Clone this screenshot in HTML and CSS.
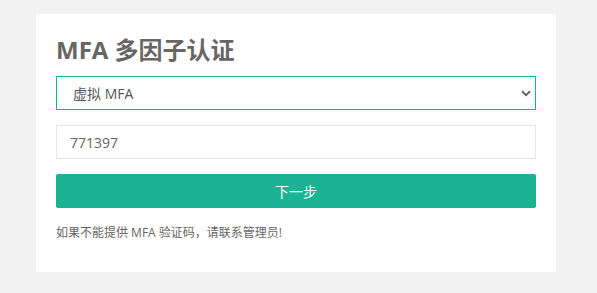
FILE: index.html
```html
<!DOCTYPE html>
<html lang="zh-CN">
<head>
<meta charset="utf-8">
<title>MFA 多因子认证</title>
<link rel="stylesheet" href="styles.css">
</head>
<body>
<div class="card">
  <h2 class="title">MFA 多因子认证</h2>
  <div class="select-wrap">
    <select class="field select">
      <option>虚拟 MFA</option>
    </select>
    <svg class="chev" width="10" height="7" viewBox="0 0 10 7"><path d="M1 1.2 L5 5.2 L9 1.2" fill="none" stroke="#666" stroke-width="2"/></svg>
  </div>
  <input class="field input" type="text" value="771397">
  <button class="btn" type="button">下一步</button>
  <p class="hint">如果不能提供 MFA 验证码，请联系管理员!</p>
</div>
</body>
</html>
```
FILE: styles.css
```css
html, body {
  margin: 0;
  padding: 0;
  background: #f2f2f2;
}
body {
  padding: 14px 0 0 36px;
  font-family: "Open Sans", "Noto Sans CJK SC", sans-serif;
  color: #666;
}
.card {
  width: 480px;
  height: 218px;
  padding: 20px;
  background: #fff;
  display: flex;
  flex-direction: column;
}
.title {
  margin: 0 0 10px;
  font-size: 24px;
  line-height: 32px;
  font-weight: 700;
  color: #666;
}
.select-wrap {
  position: relative;
  margin-bottom: 15px;
}
.field {
  box-sizing: border-box;
  display: block;
  width: 480px;
  height: 34px;
  margin: 0;
  font-family: "Open Sans", "Noto Sans CJK SC", sans-serif;
  font-size: 14px;
  color: #555;
  background: #fff;
  border-radius: 0;
  outline: none;
}
.select {
  -webkit-appearance: none;
  appearance: none;
  border: 1px solid #1ab394;
  padding: 0 0 0 16px;
}
.chev {
  position: absolute;
  right: 5px;
  top: 14px;
}
.input {
  border: 1px solid #e6e6e6;
  padding: 0 0 0 13px;
  margin-bottom: 15px;
  color: #666;
}
.btn {
  width: 480px;
  height: 34px;
  border: 0;
  border-radius: 2px;
  background: #1ab394;
  color: #fff;
  font-family: "Open Sans", "Noto Sans CJK SC", sans-serif;
  font-size: 14px;
  padding: 0;
}
.hint {
  margin: 16px 0 0;
  font-size: 12px;
  line-height: 18px;
  color: #666;
}
```
